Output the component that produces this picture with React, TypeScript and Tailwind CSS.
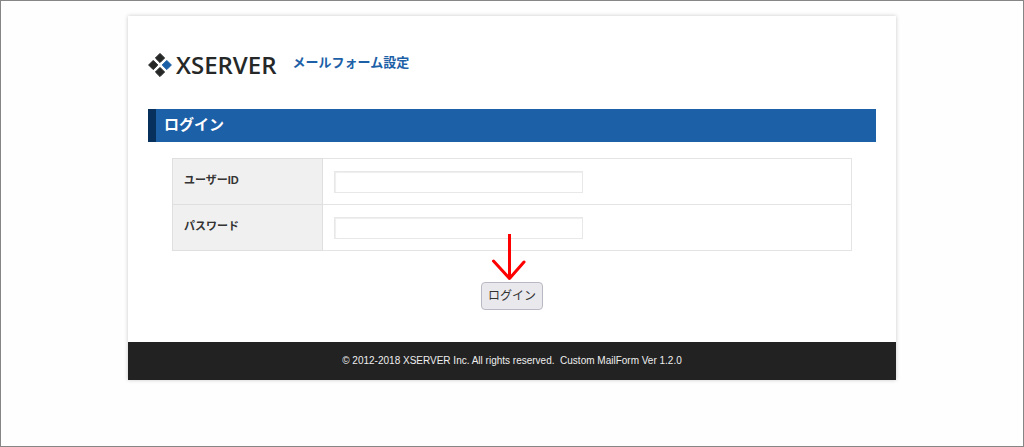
import type { FormEvent } from 'react';

const fields = [
  { id: 'user-id', label: 'ユーザーID', type: 'text' },
  { id: 'password', label: 'パスワード', type: 'password' },
];

function Logo() {
  return (
    <a href="#" className="flex items-center gap-1 text-[#252827]">
      <svg width="24" height="26" viewBox="0 0 24 26" strokeWidth="1" strokeLinejoin="round" aria-hidden="true">
        <path
          fill="#252827"
          stroke="#252827"
          d="M12 1.4l4.6 4.6-4.6 4.6L7.4 6zM5.2 8.4l4.6 4.6-4.6 4.6L.6 13zM12 15.4l4.6 4.6-4.6 4.6L7.4 20z"
        />
        <path fill="#1c60a7" stroke="#1c60a7" d="M18.8 8.4l4.6 4.6-4.6 4.6-4.6-4.6z" />
      </svg>
      <span className="font-['Open_Sans','Noto_Sans',sans-serif] text-2xl leading-6 font-semibold">XSERVER</span>
    </a>
  );
}

// Points from the password field down to the submit button
function Arrow() {
  return (
    <svg
      className="pointer-events-none absolute bottom-full left-1/2 -translate-x-1/2"
      width="40"
      height="50"
      viewBox="0 0 40 50"
      fill="none"
      stroke="#ff0000"
      strokeWidth="3"
      aria-hidden="true"
    >
      <path d="M17.5 2v45" />
      <path strokeLinecap="round" strokeLinejoin="round" d="M1.5 29L17.5 46.5 32 30" />
    </svg>
  );
}

export default function App() {
  const handleSubmit = (e: FormEvent) => e.preventDefault();

  return (
    <div className="min-h-screen border border-[#868686] bg-[#fefefe] px-4 py-[15px] font-['Liberation_Sans','Noto_Sans_CJK_JP',sans-serif] text-[#333]">
      <div className="mx-auto max-w-3xl bg-white shadow-[0_0_4px_rgba(0,0,0,0.22)]">
        <header className="flex items-center gap-4 px-5 pt-9 pb-[31px]">
          <Logo />
          <p className="pb-1 text-[13px] leading-5 font-bold text-[#1c60a7]">メールフォーム設定</p>
        </header>

        <main className="px-5 pb-8">
          <h1 className="border-l-8 border-[#08305c] bg-[#1c60a7] px-2 pt-[3px] pb-[5px] text-[15px] leading-[25px] font-bold text-white">
            ログイン
          </h1>

          <form onSubmit={handleSubmit} className="mx-6 mt-4">
            <table className="w-full border-collapse">
              <tbody>
                {fields.map((field) => (
                  <tr key={field.id} className="h-[46px]">
                    <th
                      scope="row"
                      className="w-[150px] border border-[#dfdfdf] bg-[#f0f0f0] px-[11px] pb-1 text-left text-[11px] leading-4 font-bold"
                    >
                      <label htmlFor={field.id}>{field.label}</label>
                    </th>
                    <td className="border border-[#e4e4e4] px-[11px]">
                      <input
                        id={field.id}
                        type={field.type}
                        className="block h-[22px] w-full max-w-[249px] border border-[#e8e8e8] px-1 text-xs shadow-[inset_1px_1px_1px_#eeeeee]"
                      />
                    </td>
                  </tr>
                ))}
              </tbody>
            </table>

            <div className="mt-[31px] flex justify-center">
              <div className="relative">
                <button
                  type="submit"
                  className="block rounded border border-[#b9b9c4] bg-[#e9e9ed] px-1.5 py-[3px] text-xs leading-5"
                >
                  ログイン
                </button>
                <Arrow />
              </div>
            </div>
          </form>
        </main>

        <footer className="bg-[#222] px-5 py-[11px] text-center text-[10px] leading-4 text-[#eee]">
          © 2012-2018 XSERVER Inc. All rights reserved.&nbsp; Custom MailForm Ver 1.2.0
        </footer>
      </div>
    </div>
  );
}
